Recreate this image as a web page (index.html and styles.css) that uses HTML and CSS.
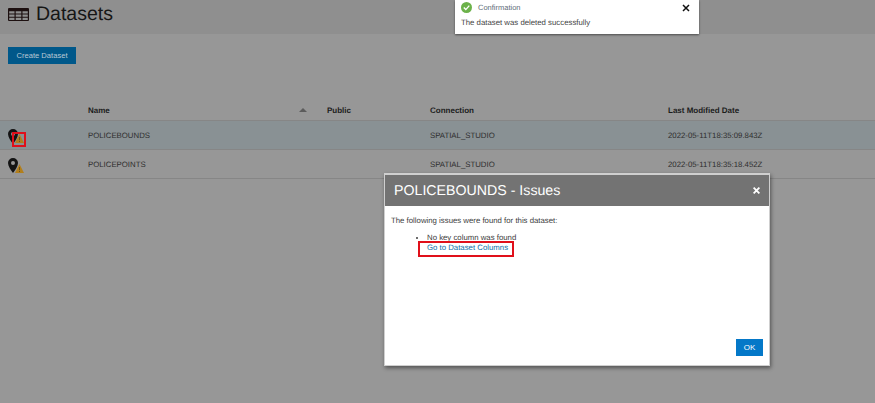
FILE: index.html
```html
<!DOCTYPE html>
<html lang="en">

<head>
    <meta charset="UTF-8">
    <meta name="viewport" content="width=device-width, initial-scale=1.0">
    <title>Datasets</title>
    <link rel="stylesheet" href="styles.css">
</head>

<body>
    <header class="page-header">
        <svg class="title-icon" width="21" height="13" viewBox="0 0 21 13">
            <path fill="#1d1010" d="M0 1a1 1 0 0 1 1-1h19a1 1 0 0 1 1 1v11a1 1 0 0 1-1 1H1a1 1 0 0 1-1-1z"/>
            <path fill="#8f8f8f" d="M1.200 3.200h5.300v2.200H1.200zM7.700 3.200h5.600v2.200H7.700zM14.500 3.200h5.300v2.200h-5.300zM1.200 6.500h5.300v2.200H1.200zM7.700 6.500h5.600v2.200H7.700zM14.500 6.500h5.300v2.200h-5.300zM1.200 9.800h5.300v2.100H1.200zM7.700 9.800h5.600v2.100H7.700zM14.500 9.800h5.300v2.100h-5.300z"/>
        </svg>
        <h1>Datasets</h1>
    </header>

    <main>
        <button class="create-button">Create Dataset</button>

        <div class="table">
            <div class="row head-row">
                <div></div>
                <div class="name-head">Name <span class="sort-arrow"></span></div>
                <div>Public</div>
                <div>Connection</div>
                <div>Last Modified Date</div>
            </div>
            <div class="row selected">
                <div class="icons">
                    <svg class="pin" width="10" height="15" viewBox="0 0 10 15">
                        <path fill="#141414" fill-rule="evenodd" d="M5 0a5 5 0 0 1 5 5c0 3.500-3 7-5 10C3 12 0 8.500 0 5a5 5 0 0 1 5-5zm0 3a2 2 0 1 0 0 4 2 2 0 0 0 0-4z"/>
                    </svg>
                    <svg class="warn warn-up" width="9" height="9" viewBox="0 0 9 9">
                        <path fill="#b27f1c" d="M4.500 0L9 9H0z"/>
                        <path fill="#6b5220" d="M4 3h1v3.300H4zM4 7h1v1H4z"/>
                    </svg>
                    <span class="mark-box"></span>
                </div>
                <div>POLICEBOUNDS</div>
                <div></div>
                <div>SPATIAL_STUDIO</div>
                <div>2022-05-11T18:35:09.843Z</div>
            </div>
            <div class="row">
                <div class="icons">
                    <svg class="pin" width="10" height="15" viewBox="0 0 10 15">
                        <path fill="#141414" fill-rule="evenodd" d="M5 0a5 5 0 0 1 5 5c0 3.500-3 7-5 10C3 12 0 8.500 0 5a5 5 0 0 1 5-5zm0 3a2 2 0 1 0 0 4 2 2 0 0 0 0-4z"/>
                    </svg>
                    <svg class="warn" width="9" height="9" viewBox="0 0 9 9">
                        <path fill="#b27f1c" d="M4.500 0L9 9H0z"/>
                        <path fill="#6b5220" d="M4 3h1v3.300H4zM4 7h1v1H4z"/>
                    </svg>
                </div>
                <div>POLICEPOINTS</div>
                <div></div>
                <div>SPATIAL_STUDIO</div>
                <div>2022-05-11T18:35:18.452Z</div>
            </div>
        </div>
    </main>

    <div class="toast">
        <div class="toast-top">
            <svg width="11" height="11" viewBox="0 0 11 11">
                <circle cx="5.500" cy="5.500" r="5.500" fill="#6cb24a"/>
                <path fill="none" stroke="#fff" stroke-width="1.400" d="M2.800 5.600l2 2 3.500-4"/>
            </svg>
            <span class="toast-title">Confirmation</span>
            <svg class="toast-close" width="8" height="8" viewBox="0 0 8 8">
                <path stroke="#111" stroke-width="1.500" d="M1 1l6 6M7 1L1 7"/>
            </svg>
        </div>
        <p>The dataset was deleted successfully</p>
    </div>

    <div class="dialog">
        <div class="dialog-head">
            <h2>POLICEBOUNDS - Issues</h2>
            <svg width="7" height="7" viewBox="0 0 7 7">
                <path stroke="#fff" stroke-width="1.800" d="M.6.600l5.800 5.800M6.400.600L.6 6.400"/>
            </svg>
        </div>
        <div class="dialog-body">
            <p>The following issues were found for this dataset:</p>
            <ul>
                <li>No key column was found<br><a href="#" class="issue-link">Go to Dataset Columns</a></li>
            </ul>
        </div>
        <div class="dialog-foot">
            <button class="ok-button">OK</button>
        </div>
    </div>
</body>

</html>
```

FILE: styles.css
```css
* {
    box-sizing: border-box;
}

body {
    margin: 0;
    height: 403px;
    overflow: hidden;
    position: relative;
    font-family: "Liberation Sans", Arial, sans-serif;
    text-rendering: geometricPrecision;
    background-color: #979797;
    color: #222;
}

.page-header {
    height: 34px;
    background-color: #8f8f8f;
    display: flex;
    align-items: center;
    padding: 0 0 6px 8px;
    gap: 7px;
}

.page-header h1 {
    margin: 0;
    font-size: 19.500px;
    font-weight: normal;
    color: #161616;
    line-height: 28px;
}

.create-button {
    display: block;
    margin: 13px 0 0 8px;
    width: 68px;
    height: 17px;
    padding: 0;
    border: none;
    background-color: #00588a;
    color: #b9c9d4;
    font-family: inherit;
    font-size: 7.600px;
}

.table {
    margin-top: 36px;
}

.row {
    display: grid;
    grid-template-columns: 88px 239px 103px 238px 1fr;
    align-items: center;
    height: 29px;
    font-size: 7.800px;
    color: #2e2e2e;
    border-bottom: 1px solid #868686;
}

.head-row {
    height: 21px;
    font-weight: bold;
    font-size: 8px;
    color: #1c1c1c;
}

.selected {
    background-color: #899194;
}

.name-head {
    display: flex;
    justify-content: space-between;
    align-items: center;
    padding-right: 20px;
}

.sort-arrow {
    width: 0;
    height: 0;
    border-left: 4px solid transparent;
    border-right: 4px solid transparent;
    border-bottom: 4px solid #5c5c5c;
}

.icons {
    position: relative;
    height: 100%;
}

.pin {
    position: absolute;
    left: 8px;
    top: 8px;
}

.warn {
    position: absolute;
    left: 15px;
    top: 14px;
}

.warn-up {
    top: 13px;
}

.mark-box {
    position: absolute;
    left: 12px;
    top: 11px;
    width: 14px;
    height: 15px;
    border: 2px solid #e0101a;
}

.toast {
    position: absolute;
    left: 455px;
    top: 0;
    width: 244px;
    height: 34px;
    background-color: #fff;
    box-shadow: 0 1px 2px rgba(0, 0, 0, 0.5);
    padding: 2px 7px 0 6px;
}

.toast-top {
    display: flex;
    align-items: center;
    height: 11px;
    gap: 6px;
}

.toast-title {
    font-size: 7.500px;
    color: #5f6e7a;
}

.toast-close {
    margin-left: auto;
    margin-right: 2px;
}

.toast p {
    margin: 5px 0 0;
    font-size: 7.800px;
    color: #444;
}

.dialog {
    position: absolute;
    left: 384px;
    top: 173px;
    width: 386px;
    height: 193px;
    background-color: #fff;
    border: 1px solid #cfcfcf;
    border-top-width: 2px;
    box-shadow: 1px 2px 4px rgba(0, 0, 0, 0.45);
    display: flex;
    flex-direction: column;
}

.dialog-head {
    height: 31px;
    flex-shrink: 0;
    background-color: #737373;
    display: flex;
    align-items: center;
    justify-content: space-between;
    padding: 0 9px;
}

.dialog-head h2 {
    margin: 0;
    font-size: 14.200px;
    font-weight: normal;
    color: #fff;
}

.dialog-body {
    flex: 1;
    padding: 10px 6px 0;
    font-size: 7.800px;
    color: #3c3c3c;
    line-height: 10px;
}

.dialog-body p {
    margin: 0;
}

.dialog-body ul {
    margin: 7px 0 0;
    padding-left: 36px;
}

.issue-link {
    display: inline-block;
    margin: -2px 0 -6px -9px;
    padding: 0 4px 2px 7px;
    border: 2px solid #e0101a;
    color: #0f6fa8;
    text-decoration: none;
}

.dialog-foot {
    display: flex;
    justify-content: flex-end;
    padding: 0 6px 9px;
}

.ok-button {
    width: 27px;
    height: 17px;
    padding: 0;
    border: none;
    background-color: #0478c8;
    color: #fff;
    font-family: inherit;
    font-size: 8px;
}
```
